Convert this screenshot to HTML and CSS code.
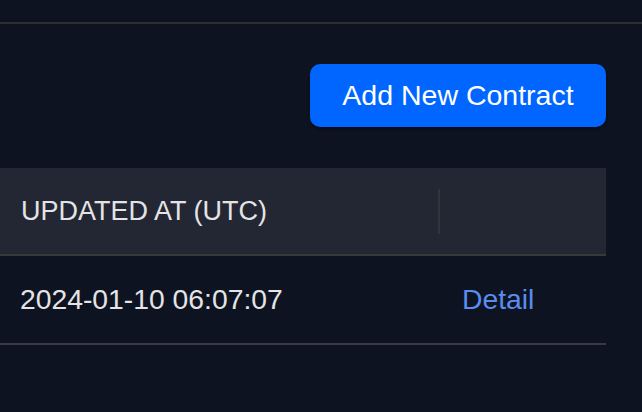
FILE: index.html
```html
<!DOCTYPE html>
<html lang="en">
<head>
<meta charset="utf-8">
<title>Contracts</title>
<link rel="stylesheet" href="styles.css">
</head>
<body>
  <div class="topbar"></div>
  <main class="content">
    <div class="actions">
      <button class="btn-primary" type="button">Add New Contract</button>
    </div>
    <table class="grid">
      <thead>
        <tr>
          <th class="col-updated">UPDATED AT (UTC)</th>
          <th class="col-action"></th>
        </tr>
      </thead>
      <tbody>
        <tr>
          <td class="col-updated">2024-01-10 06:07:07</td>
          <td class="col-action"><a class="link" href="#">Detail</a></td>
        </tr>
      </tbody>
    </table>
  </main>
</body>
</html>
```

FILE: styles.css
```css
* { box-sizing: border-box; }

html, body {
  margin: 0;
  padding: 0;
  background: #0d1320;
  font-family: "Liberation Sans", Arial, sans-serif;
  color: #e6e6e8;
}

.topbar {
  height: 24px;
  border-bottom: 2px solid #2c2f33;
}

.content {
  padding: 40px 36px 0 0;
}

.actions {
  display: flex;
  justify-content: flex-end;
}

.btn-primary {
  width: 296px;
  height: 63px;
  border: none;
  border-radius: 10px;
  background: #0066ff;
  color: #ffffff;
  font-family: "Liberation Sans", Arial, sans-serif;
  font-size: 28.5px;
  padding: 0;
  box-shadow: 0 2px 3px rgba(0, 0, 0, 0.45);
  cursor: pointer;
}

.grid {
  width: 100%;
  margin-top: 41px;
  border-collapse: collapse;
}

.grid th {
  background: #232633;
  height: 87px;
  border-bottom: 2px solid #37383a;
  text-align: left;
  font-weight: normal;
  font-size: 27px;
  color: #e4e4e6;
  padding: 0 0 0 21px;
  position: relative;
}

.grid th.col-action::before {
  content: "";
  position: absolute;
  left: 0;
  top: 21px;
  width: 2px;
  height: 45px;
  background: #34343a;
}

.grid td {
  height: 89px;
  border-bottom: 2px solid #363a48;
  font-size: 28.3px;
  color: #e4e4e6;
  padding: 0 0 0 20px;
}

.col-updated { width: 438px; }

.grid td.col-action { padding-left: 24px; }

.link {
  color: #5b8cf0;
  text-decoration: none;
}
```
